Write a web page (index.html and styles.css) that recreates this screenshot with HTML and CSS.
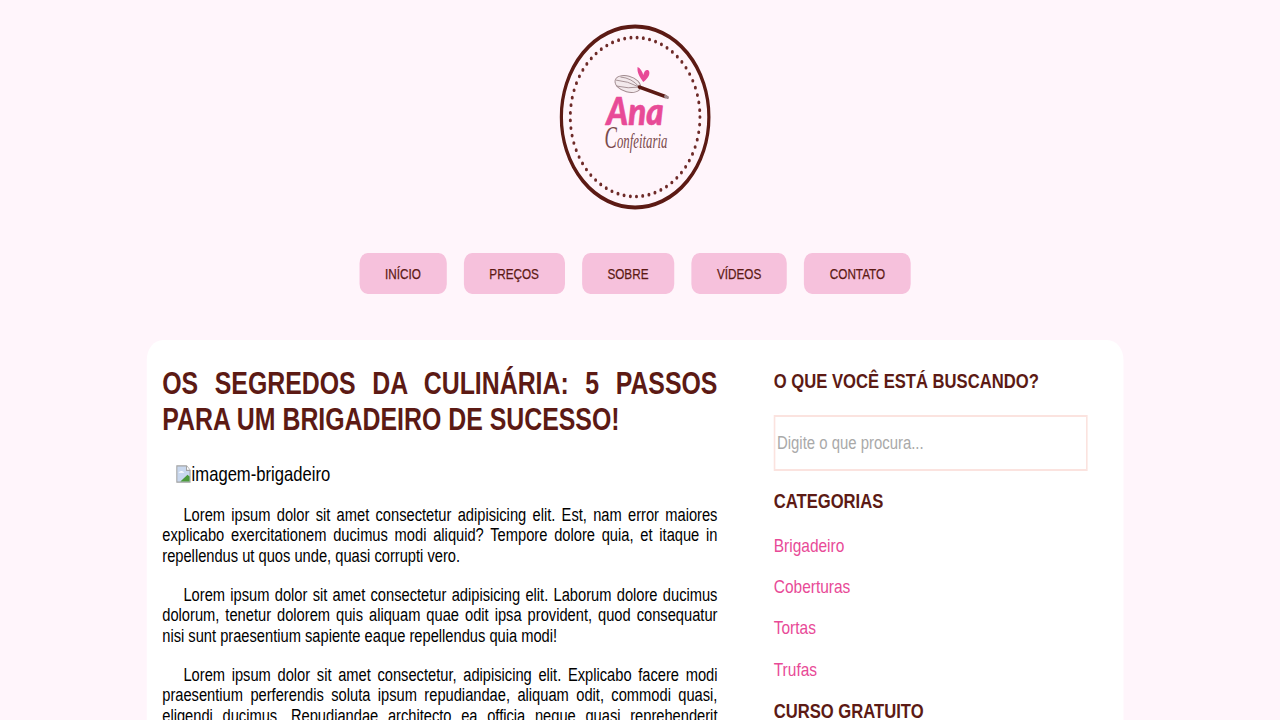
FILE: index.html
```html
<!DOCTYPE html>
<html lang="pt-BR">
<head>
    <meta charset="UTF-8">
    <meta name="viewport" content="width=device-width, initial-scale=1.0">
    <title>Ana Confeitaria</title>
    <link rel="stylesheet" href="styles.css">
</head>
<body>
<div class="pagina">

    <header class="topo">
        <svg class="logo" width="186" height="186" viewBox="0 0 186 186">
            <circle cx="93" cy="93" r="90.500" fill="none" stroke="#5c1a14" stroke-width="4"/>
            <circle cx="93" cy="93" r="79.500" fill="none" stroke="#6e2a28" stroke-width="3.700" stroke-linecap="round" stroke-dasharray="0 7.684"/>
            <!-- batedor -->
            <g fill="none" stroke="#a08a8e" stroke-width="1">
                <ellipse cx="84" cy="60" rx="16" ry="8" transform="rotate(12 84 60)" fill="#f3e9ec"/>
                <path d="M69 56 Q84 57 98 63"/>
                <path d="M70 62 Q85 65 98 63"/>
                <path d="M75 53 Q89 54 98 63"/>
            </g>
            <path d="M98 63 L130 72.500" stroke="#5c1a14" stroke-width="3.600" stroke-linecap="round"/>
            <path d="M130 72.500 L133 73.500" stroke="#a08a8e" stroke-width="3" stroke-linecap="round"/>
            <path d="M103 58 C99 53 95 49 96 43 C99 44 102 47 103 51 C104 47 107 45 109.500 46.500 C112 49 110 54 103 58Z" fill="#e84a97"/>
            <text class="logo-ana" x="93" y="101" text-anchor="middle" textLength="70" lengthAdjust="spacingAndGlyphs">Ana</text>
            <text class="logo-conf" x="94" y="124" text-anchor="middle" textLength="77" lengthAdjust="spacingAndGlyphs"><tspan class="logo-c">C</tspan>onfeitaria</text>
        </svg>
    </header>

    <nav class="menu">
        <a class="menu-item" href="#">INÍCIO</a>
        <a class="menu-item" href="#">PREÇOS</a>
        <a class="menu-item" href="#">SOBRE</a>
        <a class="menu-item" href="#">VÍDEOS</a>
        <a class="menu-item" href="#">CONTATO</a>
    </nav>

    <main class="conteudo">
        <article class="artigo">
            <h1>OS SEGREDOS DA CULINÁRIA: 5 PASSOS PARA UM BRIGADEIRO DE SUCESSO!</h1>

            <div class="imagem-quebrada">
                <svg width="20" height="20" viewBox="0 0 16 16">
                    <path d="M1.500 1.500 H11 L14.500 5 V14.500 H1.500Z" fill="#c9d8ee" stroke="#a3a3a3"/>
                    <path d="M11 1.500 V5 H14.500" fill="#fff" stroke="#a3a3a3"/>
                    <path d="M5 14 L12 8.500 L14 10 V14Z" fill="#4c9a3a"/>
                    <path d="M3 7 Q6 4 9 7Z" fill="#fff"/>
                </svg>
                <span>imagem-brigadeiro</span>
            </div>

            <p>Lorem ipsum dolor sit amet consectetur adipisicing elit. Est, nam error maiores explicabo exercitationem ducimus modi aliquid? Tempore dolore quia, et itaque in repellendus ut quos unde, quasi corrupti vero.</p>
            <p>Lorem ipsum dolor sit amet consectetur adipisicing elit. Laborum dolore ducimus dolorum, tenetur dolorem quis aliquam quae odit ipsa provident, quod consequatur nisi sunt praesentium sapiente eaque repellendus quia modi!</p>
            <p>Lorem ipsum dolor sit amet consectetur, adipisicing elit. Explicabo facere modi praesentium perferendis soluta ipsum repudiandae, aliquam odit, commodi quasi, eligendi ducimus. Repudiandae architecto ea officia neque quasi reprehenderit voluptatum nemo dolores.</p>
        </article>

        <aside class="lateral">
            <h2 class="titulo-busca">O QUE VOCÊ ESTÁ BUSCANDO?</h2>
            <input class="busca" type="text" placeholder="Digite o que procura...">

            <h2>CATEGORIAS</h2>
            <ul class="categorias">
                <li><a href="#">Brigadeiro</a></li>
                <li><a href="#">Coberturas</a></li>
                <li><a href="#">Tortas</a></li>
                <li><a href="#">Trufas</a></li>
            </ul>

            <h2>CURSO GRATUITO</h2>
        </aside>
    </main>

</div>
</body>
</html>
```

FILE: styles.css
```css
* {
    box-sizing: border-box;
}
html, body {
    height: 720px;
    overflow: hidden;
}
body {
    margin: 0;
    background-color: #fff5fb;
    font-family: "Liberation Sans", Arial, sans-serif;
    color: #000;
}
/* a referencia inteira esta comprimida na horizontal */
.pagina {
    width: 1558px;
    transform: scaleX(0.8153);
    transform-origin: 0 0;
}
.topo {
    display: flex;
    justify-content: center;
    padding: 24px 0 0;
}
.logo {
    display: block;
}
.logo-ana {
    font-family: "Lato", sans-serif;
    font-weight: 900;
    font-style: italic;
    font-size: 37.500px;
    fill: #e84a97;
    stroke: #e84a97;
    stroke-width: 0.6px;
    stroke-linejoin: round;
}
.logo-conf {
    font-family: "Liberation Serif", serif;
    font-style: italic;
    font-size: 22px;
    fill: #7a4a4c;
}
.logo-c {
    font-size: 32px;
}
.menu {
    display: flex;
    justify-content: center;
    gap: 21px;
    margin-top: 43px;
}
.menu-item {
    display: flex;
    align-items: center;
    height: 41px;
    padding: 0 31.500px;
    background-color: #f6c1dc;
    border-radius: 10px;
    font-size: 14.400px;
    -webkit-text-stroke: 0.25px #5c1a14;
    color: #5c1a14;
    text-decoration: none;
}
.conteudo {
    display: flex;
    width: 1198px;
    margin: 46px auto 0;
    padding: 25px 18px 25px 19px;
    gap: 69px;
    background-color: #fff;
    border-radius: 20px;
}
.artigo {
    width: 681px;
    flex-shrink: 0;
}
h1 {
    margin: 0;
    font-size: 30.500px;
    line-height: 36px;
    text-align: justify;
    color: #5c1a14;
}
.imagem-quebrada {
    display: flex;
    align-items: center;
    margin: 25px 0 0 16px;
    height: 24px;
    font-size: 20.400px;
}
p {
    margin: 18.500px 0 0;
    font-size: 18px;
    line-height: 20.500px;
    text-align: justify;
    text-indent: 26px;
}
.lateral {
    width: 384px;
}
h2 {
    margin: 0;
    font-size: 20.400px;
    line-height: 24px;
    color: #5c1a14;
}
.titulo-busca {
    margin-top: 4px;
}
.busca {
    display: block;
    width: 385px;
    height: 56px;
    margin: 22px 0 18px;
    padding: 0 2px;
    border: 2px solid #fbe3df;
    outline: none;
    font-family: "Liberation Sans", Arial, sans-serif;
    font-size: 18.300px;
}
.busca::placeholder {
    color: #a9a9a9;
}
.categorias {
    list-style: none;
    margin: 21px 0 17px;
    padding: 0;
}
.categorias li {
    font-size: 19px;
    line-height: 24px;
    margin-bottom: 17.200px;
}
.categorias a {
    color: #e84a97;
    text-decoration: none;
}
```
